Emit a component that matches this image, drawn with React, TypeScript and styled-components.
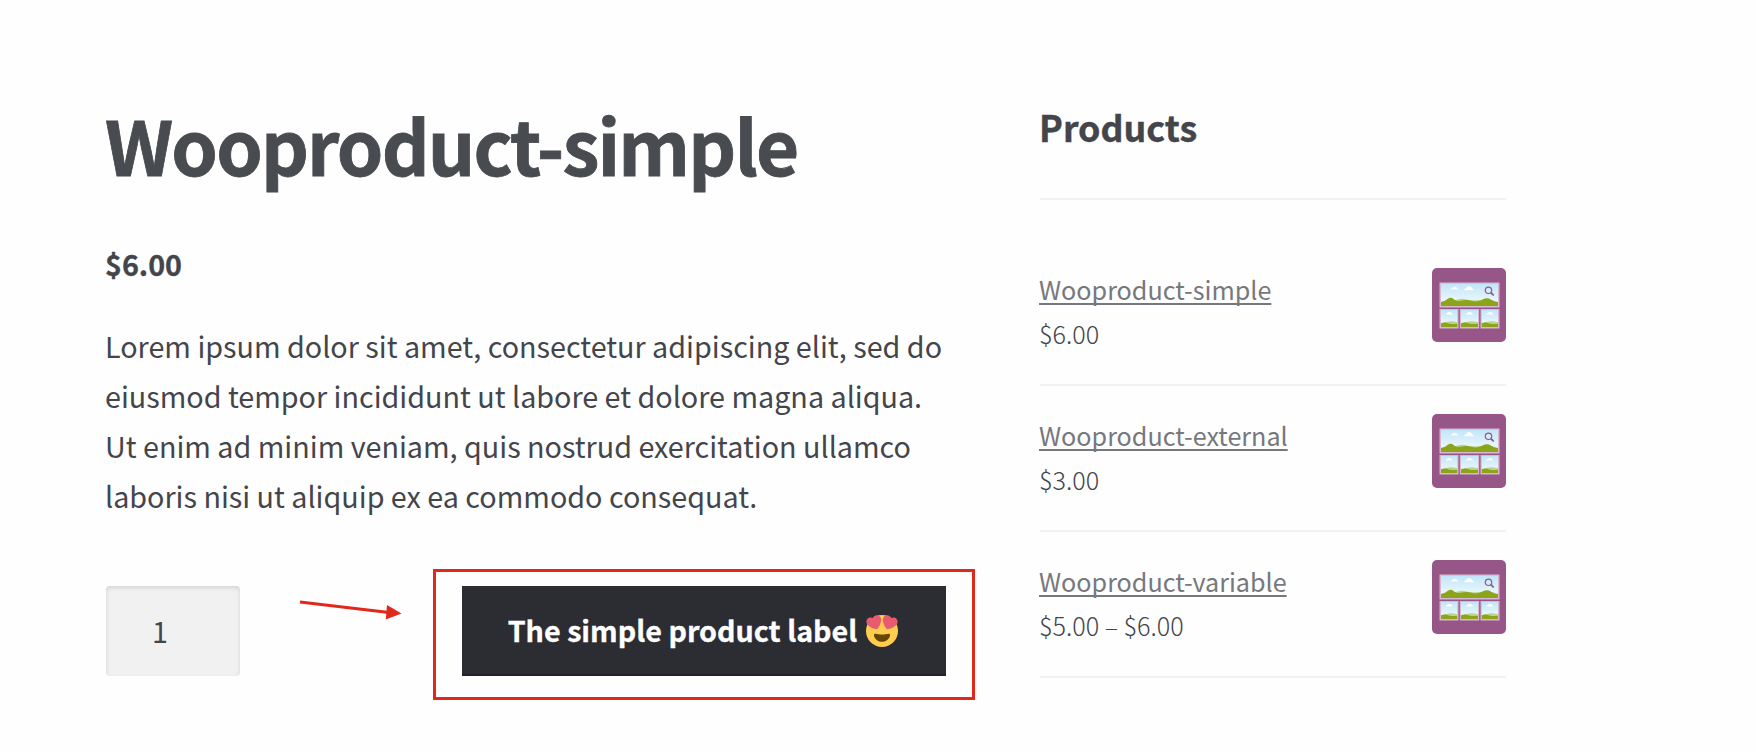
import React from "react";
import styled, { createGlobalStyle } from "styled-components";

const GlobalStyle = createGlobalStyle`
  *, *::before, *::after { box-sizing: border-box; }
  body {
    margin: 0;
    background: #fefefe;
    color: #43454b;
    font-family: "Noto Sans CJK SC", "Noto Sans", sans-serif;
    -webkit-font-smoothing: antialiased;
  }
  h1, h2, p, ul { margin: 0; padding: 0; }
`;

const Page = styled.div`
  display: flex;
  align-items: flex-start;
  height: 752px;
  padding: 98px 250px 0 105px;
  overflow: hidden;
`;

const Summary = styled.main`
  width: 871px;
  margin-right: 64px;
`;

const Title = styled.h1`
  padding-top: 1px;
  font-size: 74.5px;
  font-weight: 700;
  line-height: 90px;
  letter-spacing: -1.83px;
  color: #484b50;
  -webkit-text-stroke: 0.8px #484b50;
  white-space: nowrap;
`;

const Price = styled.p`
  margin-top: 50px;
  font-size: 28.7px;
  font-weight: 700;
  line-height: 50px;
  -webkit-text-stroke: 0.3px #43454b;
`;

const Description = styled.p`
  margin-top: 32px;
  font-size: 28.72px;
  line-height: 50px;
  white-space: nowrap;
`;

const CartForm = styled.div`
  display: flex;
  align-items: flex-start;
  justify-content: space-between;
  margin: 48px 1px 0 1px;
  height: 131px;
  width: 869px;
`;

const Quantity = styled.input`
  width: 134px;
  height: 90px;
  margin-top: 17px;
  padding: 0 26px 2px 0;
  border: 0;
  border-radius: 4px;
  background: #f1f1f1;
  box-shadow: inset 0 2px 4px rgba(0, 0, 0, 0.125);
  color: #43454b;
  font: inherit;
  font-size: 28.7px;
  text-align: center;
`;

const Arrow = styled.svg`
  display: block;
  width: 104px;
  height: 22px;
  margin: 29px 0 0 29px;
`;

const Highlight = styled.div`
  width: 542px;
  height: 131px;
  padding: 14px 26px;
  border: 3px solid #e2281a;
`;

const CartButton = styled.button`
  display: flex;
  align-items: center;
  justify-content: center;
  width: 484px;
  height: 90px;
  padding: 0 2px 1px 0;
  border: 0;
  background: #2c2d33;
  box-shadow: inset 0 -2px 0 #212227;
  color: #fff;
  font: inherit;
  font-size: 28.7px;
  font-weight: 700;
  -webkit-text-stroke: 0.3px #fff;
  white-space: nowrap;
`;

const ButtonLabel = styled.span`
  padding-bottom: 3px;
`;

const Emoji = styled.svg`
  width: 32px;
  height: 32px;
  margin-left: 9px;
`;

const Sidebar = styled.aside`
  width: 466px;
`;

const WidgetTitle = styled.h2`
  padding-bottom: 44px;
  border-bottom: 2px solid #f2f2f2;
  font-size: 35.8px;
  font-weight: 700;
  line-height: 56px;
  text-indent: -1px;
  -webkit-text-stroke: 0.4px #43454b;
`;

const ProductList = styled.ul`
  margin-top: 40px;
  list-style: none;
`;

const ProductItem = styled.li`
  display: flex;
  justify-content: space-between;
  align-items: flex-start;
  height: 146px;
  padding-top: 26px;
  border-bottom: 2px solid #f2f2f2;
  font-size: 25.15px;
  line-height: 44px;
`;

const ProductText = styled.div`
  margin: 1px 0 0 -1px;
`;

const ProductLink = styled.a`
  display: block;
  color: #77787d;
  text-decoration: underline;
  text-decoration-thickness: 2px;
  text-underline-offset: 3px;
  text-decoration-skip-ink: none;
`;

const ProductPrice = styled.span`
  display: block;
  font-weight: 300;
`;

const Thumb = styled.svg`
  display: block;
  width: 74px;
  height: 74px;
  margin-top: 2px;
`;

function Landscape({ x, y, w, h, wide }: { x: number; y: number; w: number; h: number; wide?: boolean }) {
  return (
    <svg x={x} y={y} width={w} height={h} viewBox={wide ? "0 0 58 23" : "0 0 17 18"} preserveAspectRatio="none">
      <rect width={wide ? 58 : 17} height={wide ? 23 : 18} fill="url(#sky)" />
      {wide ? (
        <>
          <path d="M10 6.200q0-1.700 1.700-1.500q1-2.400 2.900-1.200q1.500-.2 1.600 1.300q1.600 0 1.600 1.400z" fill="#fff" opacity=".85" />
          <path d="M23.500 7q0-2.200 2.300-2.200q1.200-3.300 4-1.500q1.900 0 2 1.800q1.600.2 1.500 1.900z" fill="#fff" />
          <path d="M0 23V19Q5 18 14 17.500Q20 14.500 27 16.500Q38 18 44 16Q52 16 58 19V23z" fill="#b9d488" />
          <path d="M0 23V19Q4 18.500 7 15.700Q10 13.500 13 16Q17 19 21 17.500Q26 16 32 18Q37 19 42 16.500Q47 13.500 51 16.500Q54 19 58 19V23z" fill="#8ba41c" />
        </>
      ) : (
        <>
          <path d="M5 4.800q0-1.600 1.500-1.500q.9-2.200 2.800-1.200q1.500 0 1.500 1.200q1.300.1 1.200 1.500z" fill="#fff" />
          <path d="M0 18V14.500Q8 10 17 13V18z" fill="#b9d488" />
          <path d="M0 18V14Q4 12.500 8 14.300Q13 15.500 17 14.500V18z" fill="#8ba41c" />
        </>
      )}
    </svg>
  );
}

function GalleryThumb() {
  return (
    <Thumb viewBox="0 0 74 74" aria-hidden="true">
      <defs>
        <linearGradient id="sky" x1="0" y1="0" x2="0" y2="1">
          <stop offset="0" stopColor="#bfe6fa" />
          <stop offset="1" stopColor="#f6fbfb" />
        </linearGradient>
      </defs>
      <rect width="74" height="74" rx="5" fill="#965788" />
      <g fill="#d9b9cf">
        <rect x="7.500" y="14.500" width="60" height="25" />
        <rect x="7.500" y="41" width="19" height="19.500" />
        <rect x="27.800" y="41" width="19.400" height="19.500" />
        <rect x="48.500" y="41" width="19" height="19.500" />
      </g>
      <Landscape x={9} y={15.5} w={57} h={22.5} wide />
      <Landscape x={9} y={42} w={16.5} h={17} />
      <Landscape x={29} y={42} w={17} h={17} />
      <Landscape x={49.5} y={42} w={16.5} h={17} />
      <g fill="none" stroke="#965788" strokeLinecap="round">
        <circle cx="56.500" cy="22.300" r="3.200" strokeWidth="1.200" />
        <path d="M59.200 25L61.200 26.800" strokeWidth="1.800" />
      </g>
    </Thumb>
  );
}

function HeartEyes() {
  return (
    <Emoji viewBox="0 0 36 36" role="img" aria-label="heart eyes">
      <circle cx="18" cy="18" r="18" fill="#ffcc4d" />
      <path
        fill="#e75a70"
        d="M16.650 3.281C15.791.85 13.126-.426 10.694.431c-1.476.52-2.521 1.711-2.928 3.104-1.191-.829-2.751-1.100-4.225-.58C1.111 3.813-.167 6.480.692 8.911c.122.344.284.663.472.958 1.951 3.582 7.588 6.100 11.001 6.131 2.637-2.167 5.446-7.665 4.718-11.677-.038-.348-.113-.698-.233-1.042zm2.700 0C20.209.85 22.875-.426 25.306.431c1.476.52 2.521 1.711 2.929 3.104 1.191-.829 2.751-1.100 4.225-.58 2.430.858 3.707 3.525 2.850 5.956-.123.344-.284.663-.473.958-1.951 3.582-7.588 6.100-11.002 6.131-2.637-2.167-5.445-7.665-4.717-11.677.037-.348.112-.698.232-1.042z"
      />
      <path
        fill="#664500"
        d="M18 21.849c-2.966 0-4.935-.346-7.369-.819-.557-.106-1.638 0-1.638 1.638 0 3.275 3.763 7.369 9.007 7.369s9.007-4.094 9.007-7.369c0-1.638-1.082-1.745-1.638-1.638-2.434.473-4.402.819-7.369.819"
      />
    </Emoji>
  );
}

const products = [
  { name: "Wooproduct-simple", price: "$6.00" },
  { name: "Wooproduct-external", price: "$3.00" },
  { name: "Wooproduct-variable", price: "$5.00 – $6.00" },
];

export default function App() {
  return (
    <>
      <GlobalStyle />
      <Page>
        <Summary>
          <Title>Wooproduct-simple</Title>
          <Price>$6.00</Price>
          <Description>
            Lorem ipsum dolor sit amet, consectetur adipiscing elit, sed do
            <br />
            eiusmod tempor incididunt ut labore et dolore magna aliqua.
            <br />
            Ut enim ad minim veniam, quis nostrud exercitation ullamco
            <br />
            laboris nisi ut aliquip ex ea commodo consequat.
          </Description>
          <CartForm>
            <Quantity defaultValue="1" aria-label="Quantity" />
            <Arrow viewBox="0 0 104 22" aria-hidden="true">
              <path d="M1 4L90 14.500" stroke="#e2281a" strokeWidth="3" />
              <path d="M88 7L102.500 15.500L86.800 21.500z" fill="#e2281a" />
            </Arrow>
            <Highlight>
              <CartButton>
                <ButtonLabel>The simple product label</ButtonLabel>
                <HeartEyes />
              </CartButton>
            </Highlight>
          </CartForm>
        </Summary>
        <Sidebar>
          <WidgetTitle>Products</WidgetTitle>
          <ProductList>
            {products.map((product) => (
              <ProductItem key={product.name}>
                <ProductText>
                  <ProductLink>{product.name}</ProductLink>
                  <ProductPrice>{product.price}</ProductPrice>
                </ProductText>
                <GalleryThumb />
              </ProductItem>
            ))}
          </ProductList>
        </Sidebar>
      </Page>
    </>
  );
}
